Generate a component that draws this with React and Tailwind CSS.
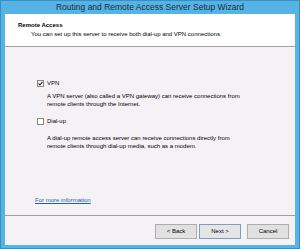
export default function App() {
  const f = { fontFamily: '"Liberation Sans", Arial, sans-serif' };
  return (
    <div className="w-[300px] h-[249px] bg-[#56b4e4] border border-[#3a8fc2] flex flex-col text-[#000]" style={f}>
      <div className="h-[13px] flex items-center justify-center text-[8.5px] text-[#1b2d3f] leading-none">
        Routing and Remote Access Server Setup Wizard
      </div>
      <div className="flex-1 mx-[4px] mb-[3px] flex flex-col bg-[#f4f2f5]">
        <div className="bg-white h-[33px] border-b border-[#a0a0a0] pl-[13px] pt-[7px] text-[6px] leading-[8px]">
          <div className="font-bold">Remote Access</div>
          <div className="pl-[13px] pt-[1px]">You can set up this server to receive both dial-up and VPN connections.</div>
        </div>
        <div className="flex-1 flex flex-col pl-[32px] text-[6px] leading-[8px]">
          <div className="flex items-center gap-[3px] mt-[32px]">
            <div className="w-[7px] h-[7px] border border-[#888] bg-white flex items-center justify-center">
              <svg width="5" height="5" viewBox="0 0 5 5"><path d="M0.5 2.5 L2 4 L4.5 0.8" stroke="#222" strokeWidth="1.1" fill="none" /></svg>
            </div>
            <span>VPN</span>
          </div>
          <div className="pl-[10px] mt-[5px]">
            <div>A VPN server (also called a VPN gateway) can receive connections from</div>
            <div>remote clients through the Internet.</div>
          </div>
          <div className="flex items-center gap-[3px] mt-[9px]">
            <div className="w-[7px] h-[7px] border border-[#888] bg-white" />
            <span>Dial-up</span>
          </div>
          <div className="pl-[10px] mt-[9px]">
            <div>A dial-up remote access server can receive connections directly from</div>
            <div>remote clients through dial-up media, such as a modem.</div>
          </div>
          <div className="mt-auto mb-[11px] -ml-[2px] text-[#1f5fb4] underline">For more information</div>
        </div>
        <div className="h-[30px] border-t border-[#a0a0a0] flex items-center justify-end pr-[6px] pt-[1px] text-[6px]">
          <div className="w-[42px] h-[15px] border border-[#adadad] bg-[#e1e1e1] flex items-center justify-center">&lt; Back</div>
          <div className="w-[42px] h-[15px] ml-[2px] border border-[#7a9fc4] bg-[#e5e5e5] flex items-center justify-center">Next &gt;</div>
          <div className="w-[42px] h-[15px] ml-[6px] border border-[#adadad] bg-[#e1e1e1] flex items-center justify-center">Cancel</div>
        </div>
      </div>
    </div>
  );
}
